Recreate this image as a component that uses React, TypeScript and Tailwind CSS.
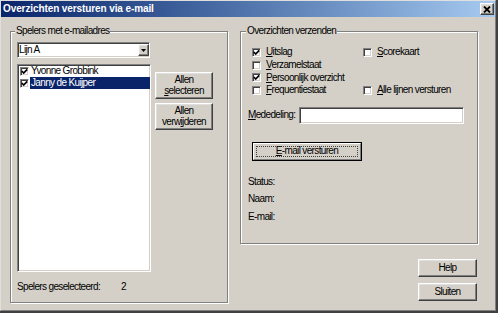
import React from "react";

const raised =
  "border border-t-white border-l-white border-r-[#404040] border-b-[#404040] shadow-[inset_-1px_-1px_0_#808080,inset_1px_1px_0_#dfdfdf] bg-[#d4d0c8]";
const sunken =
  "border border-t-[#808080] border-l-[#808080] border-r-white border-b-white shadow-[inset_1px_1px_0_#404040,inset_-1px_-1px_0_#d4d0c8] bg-white";
const etched =
  "relative border border-[#808080] shadow-[inset_1px_1px_0_#fff,1px_1px_0_#fff]";

function Check({ checked }: { checked?: boolean }) {
  return (
    <span
      className={`w-[9px] h-[9px] shrink-0 flex items-center justify-center border border-t-[#808080] border-l-[#808080] border-r-white border-b-white shadow-[inset_1px_1px_0_#404040,inset_-1px_-1px_0_#d4d0c8] bg-white`}
    >
      {checked && (
        <svg width="7" height="7" viewBox="0 0 7 7">
          <path d="M0.8 3 L2.7 5 L6.2 1.3" stroke="#000" strokeWidth="1.7" fill="none" />
        </svg>
      )}
    </span>
  );
}

function CB({ checked, u, rest }: { checked?: boolean; u: string; rest: string }) {
  return (
    <div className="flex items-center h-[12.7px] gap-[5px] whitespace-nowrap">
      <Check checked={checked} />
      <span>
        <span className="underline underline-offset-[1px]">{u}</span>
        {rest}
      </span>
    </div>
  );
}

export default function App() {
  return (
    <div className="w-[498px] h-[313px] bg-[#404040] pr-[2px] pb-[2px] font-['Liberation_Sans',Arial,sans-serif] text-[10px] leading-[12px] tracking-[-0.65px] text-black">
      <div className="w-full h-full flex flex-col bg-[#d4d0c8] border-t border-l border-t-[#dfdfdf] border-l-[#dfdfdf] border-r border-b border-r-[#808080] border-b-[#808080]">
        {/* Title bar */}
        <div className="h-[16px] shrink-0 flex items-center bg-linear-to-r from-[#0a246a] to-[#a6caf0] pl-[2px] pr-[1px]">
          <span className="text-white font-bold tracking-[-0.1px]">Overzichten versturen via e-mail</span>
          <div className={`ml-auto w-[14px] h-[12px] flex items-center justify-center ${raised}`}>
            <svg width="8" height="7" viewBox="0 0 8 7">
              <path d="M1 0.5 L7 6.5 M7 0.5 L1 6.5" stroke="#000" strokeWidth="1.8" />
            </svg>
          </div>
        </div>

        {/* Body */}
        <div className="flex-1 flex pl-[9px] pt-[14px]">
          {/* Left group */}
          <div className={`w-[218px] h-[272px] shrink-0 flex flex-col pl-[6px] pt-[10px] ${etched}`}>
            <span className="absolute -top-[7px] left-[4px] px-[1px] bg-[#d4d0c8] leading-[12px]">
              Spelers met e-mailadres
            </span>
            <div className={`w-[133px] h-[16px] flex items-center pl-[1px] pr-0 ${sunken}`}>
              <span className="flex-1">Lijn A</span>
              <div className={`w-[11px] h-[12px] flex items-center justify-center ${raised}`}>
                <svg width="5" height="3" viewBox="0 0 5 3">
                  <path d="M0 0 H5 L2.5 3 Z" fill="#000" />
                </svg>
              </div>
            </div>
            <div className="flex mt-[6px]">
              <div className={`w-[134px] h-[208px] flex flex-col pl-[2px] pt-0 ${sunken}`}>
                <div className="flex items-center h-[12px]">
                  <Check checked />
                  <span className="ml-[1px] pl-[1px] flex-1 h-[12px] flex items-center whitespace-nowrap">
                    Yvonne Grobbink
                  </span>
                </div>
                <div className="flex items-center h-[12px]">
                  <Check checked />
                  <span className="ml-[1px] pl-[1px] flex-1 h-[12px] flex items-center whitespace-nowrap bg-[#0a246a] text-white">
                    Janny de Kuijper
                  </span>
                </div>
              </div>
              <div className="flex flex-col ml-[4px] mt-[8px] gap-[4px]">
                <div className={`w-[58px] h-[27px] flex flex-col items-center justify-center leading-[10.5px] ${raised}`}>
                  <span>Allen</span>
                  <span>
                    <span className="underline underline-offset-[1px]">s</span>electeren
                  </span>
                </div>
                <div className={`w-[58px] h-[27px] flex flex-col items-center justify-center leading-[10.5px] ${raised}`}>
                  <span>Allen</span>
                  <span>
                    verw<span className="underline underline-offset-[1px]">ij</span>deren
                  </span>
                </div>
              </div>
            </div>
            <div className="flex mt-[9px] h-[12px] items-center">
              <span className="w-[104px]">Spelers geselecteerd:</span>
              <span>2</span>
            </div>
          </div>

          {/* Right column */}
          <div className="flex flex-col ml-[12px]">
            <div className={`w-[238px] h-[213px] flex flex-col pl-[7px] pt-[14px] ${etched}`}>
              <span className="absolute -top-[7px] left-[5px] px-[1px] bg-[#d4d0c8] leading-[12px]">
                Overzichten verzenden
              </span>
              <div className="ml-[4px] grid grid-cols-[111px_auto]">
                <CB checked u="U" rest="itslag" />
                <CB u="S" rest="corekaart" />
                <CB u="V" rest="erzamelstaat" />
                <div />
                <CB checked u="P" rest="ersoonlijk overzicht" />
                <div />
                <CB u="F" rest="requentiestaat" />
                <CB u="A" rest="lle lijnen versturen" />
              </div>
              <div className="flex items-center h-[17px] mt-[10px]">
                <span className="w-[51px]">
                  <span className="underline underline-offset-[1px]">M</span>ededeling:
                </span>
                <div className={`w-[165px] h-[17px] ${sunken}`} />
              </div>
              <div className="ml-[4px] mt-[18px] w-[110px] h-[19px] border border-black">
                <div className="w-full h-full border border-t-white border-l-white border-r-[#808080] border-b-[#808080] p-[2px]">
                  <div className="w-full h-full border border-dotted border-[#404040] flex items-center justify-center">
                    <span>
                      <span className="underline underline-offset-[1px]">E</span>-mail versturen
                    </span>
                  </div>
                </div>
              </div>
              <div className="mt-[12px] flex flex-col">
                <div className="h-[17.5px] flex items-center">Status:</div>
                <div className="h-[17.5px] flex items-center">Naam:</div>
                <div className="h-[17.5px] flex items-center">E-mail:</div>
              </div>
            </div>
            <div className="mt-[15px] flex flex-col items-end gap-[6px] pr-[1px]">
              <div className={`w-[59px] h-[18px] flex items-center justify-center ${raised}`}>Help</div>
              <div className={`w-[59px] h-[18px] flex items-center justify-center ${raised}`}>Sluiten</div>
            </div>
          </div>
        </div>
      </div>
    </div>
  );
}
